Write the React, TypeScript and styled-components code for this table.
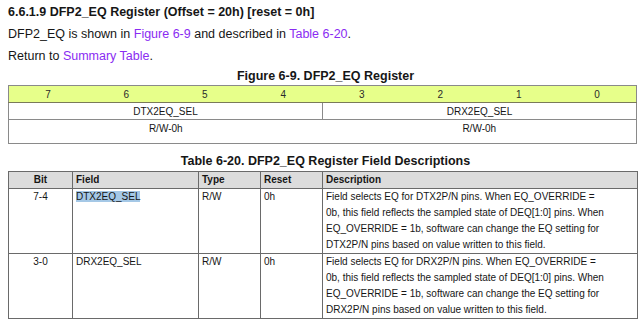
import React, { FC } from 'react';
import styled, { createGlobalStyle } from 'styled-components';

const GlobalStyle = createGlobalStyle`
    html, body {
        margin: 0;
        padding: 0;
        background: #ffffff;
    }
    body {
        font-family: 'Liberation Sans', Arial, sans-serif;
        color: #161616;
    }
`;

const Page = styled.div`
    width: 629px;
    padding: 1px 3px 0 8px;
`;

const Heading = styled.h4`
    margin: 0;
    font-size: 12.5px;
    font-weight: bold;
    line-height: 22px;
`;

const Para = styled.p`
    margin: 0;
    font-size: 12.5px;
    line-height: 22px;
`;

const Link = styled.a`
    color: #8a2cf2;
    text-decoration: none;
`;

const Caption = styled.div<{ $top?: number; $height?: number }>`
    margin-top: ${(p) => p.$top ?? 0}px;
    height: ${(p) => p.$height ?? 18}px;
    line-height: ${(p) => p.$height ?? 18}px;
    font-size: 12.5px;
    font-weight: bold;
    text-align: center;
    padding-left: 6px;
`;

const RegTable = styled.table`
    width: 629px;
    table-layout: fixed;
    border-collapse: collapse;
    border: 1px solid #8a8a8a;
    font-size: 10px;
`;

const BitCell = styled.td`
    height: 16px;
    padding: 0;
    background: #e7ff8a;
    border-bottom: 1px solid #7a7a5a;
    text-align: center;
    color: #2a2a2a;
`;

const RegCell = styled.td<{ $height: number; $divider?: boolean }>`
    height: ${(p) => p.$height}px;
    padding: 0;
    text-align: center;
    border-bottom: 1px solid #8a8a8a;
    border-right: ${(p) => (p.$divider ? '1px solid #8a8a8a' : 'none')};
    vertical-align: ${(p) => (p.$height > 18 ? 'top' : 'middle')};
    padding-top: ${(p) => (p.$height > 18 ? 3 : 0)}px;
`;

const FieldTable = styled.table`
    width: 629px;
    table-layout: fixed;
    border-collapse: collapse;
    font-size: 10px;
    line-height: 16px;
`;

const Th = styled.th<{ $center?: boolean }>`
    height: 16px;
    padding: 0 3px;
    background: #dcdcdc;
    border: 1px solid #6a6a6a;
    text-align: ${(p) => (p.$center ? 'center' : 'left')};
    font-weight: bold;
`;

const Td = styled.td<{ $center?: boolean }>`
    height: 64px;
    padding: 0 3px;
    border: 1px solid #6a6a6a;
    vertical-align: top;
    text-align: ${(p) => (p.$center ? 'center' : 'left')};
`;

const Selected = styled.span`
    background: #a5c8e6;
`;

interface Field {
    bits: string;
    name: string;
    desc: string[];
    selected?: boolean;
}

const fields: Field[] = [
    {
        bits: '7-4',
        name: 'DTX2EQ_SEL',
        selected: true,
        desc: [
            'Field selects EQ for DTX2P/N pins. When EQ_OVERRIDE =',
            '0b, this field reflects the sampled state of DEQ[1:0] pins. When',
            'EQ_OVERRIDE = 1b, software can change the EQ setting for',
            'DTX2P/N pins based on value written to this field.',
        ],
    },
    {
        bits: '3-0',
        name: 'DRX2EQ_SEL',
        desc: [
            'Field selects EQ for DRX2P/N pins. When EQ_OVERRIDE =',
            '0b, this field reflects the sampled state of DEQ[1:0] pins. When',
            'EQ_OVERRIDE = 1b, software can change the EQ setting for',
            'DRX2P/N pins based on value written to this field.',
        ],
    },
];

const App: FC = () => (
    <Page>
        <GlobalStyle />
        <Heading>6.6.1.9 DFP2_EQ Register (Offset = 20h) [reset = 0h]</Heading>
        <Para>
            DFP2_EQ is shown in <Link>Figure 6-9</Link> and described in <Link>Table 6-20</Link>.
        </Para>
        <Para>
            Return to <Link>Summary Table</Link>.
        </Para>
        <Caption $top={0}>Figure 6-9. DFP2_EQ Register</Caption>
        <RegTable>
            <tbody>
                <tr>
                    {[7, 6, 5, 4, 3, 2, 1, 0].map((b) => (
                        <BitCell key={b}>{b}</BitCell>
                    ))}
                </tr>
                <tr>
                    <RegCell colSpan={4} $height={16} $divider>
                        DTX2EQ_SEL
                    </RegCell>
                    <RegCell colSpan={4} $height={16}>
                        DRX2EQ_SEL
                    </RegCell>
                </tr>
                <tr>
                    <RegCell colSpan={4} $height={20}>
                        R/W-0h
                    </RegCell>
                    <RegCell colSpan={4} $height={20}>
                        R/W-0h
                    </RegCell>
                </tr>
            </tbody>
        </RegTable>
        <Caption $top={8} $height={19}>
            Table 6-20. DFP2_EQ Register Field Descriptions
        </Caption>
        <FieldTable>
            <colgroup>
                <col style={{ width: 64 }} />
                <col style={{ width: 126 }} />
                <col style={{ width: 62 }} />
                <col style={{ width: 62 }} />
                <col style={{ width: 315 }} />
            </colgroup>
            <thead>
                <tr>
                    <Th $center>Bit</Th>
                    <Th>Field</Th>
                    <Th>Type</Th>
                    <Th>Reset</Th>
                    <Th>Description</Th>
                </tr>
            </thead>
            <tbody>
                {fields.map((f) => (
                    <tr key={f.bits}>
                        <Td $center>{f.bits}</Td>
                        <Td>{f.selected ? <Selected>{f.name}</Selected> : f.name}</Td>
                        <Td>R/W</Td>
                        <Td>0h</Td>
                        <Td>
                            {f.desc.map((line, i) => (
                                <React.Fragment key={i}>
                                    {line}
                                    {i < f.desc.length - 1 && <br />}
                                </React.Fragment>
                            ))}
                        </Td>
                    </tr>
                ))}
            </tbody>
        </FieldTable>
    </Page>
);

export default App;
